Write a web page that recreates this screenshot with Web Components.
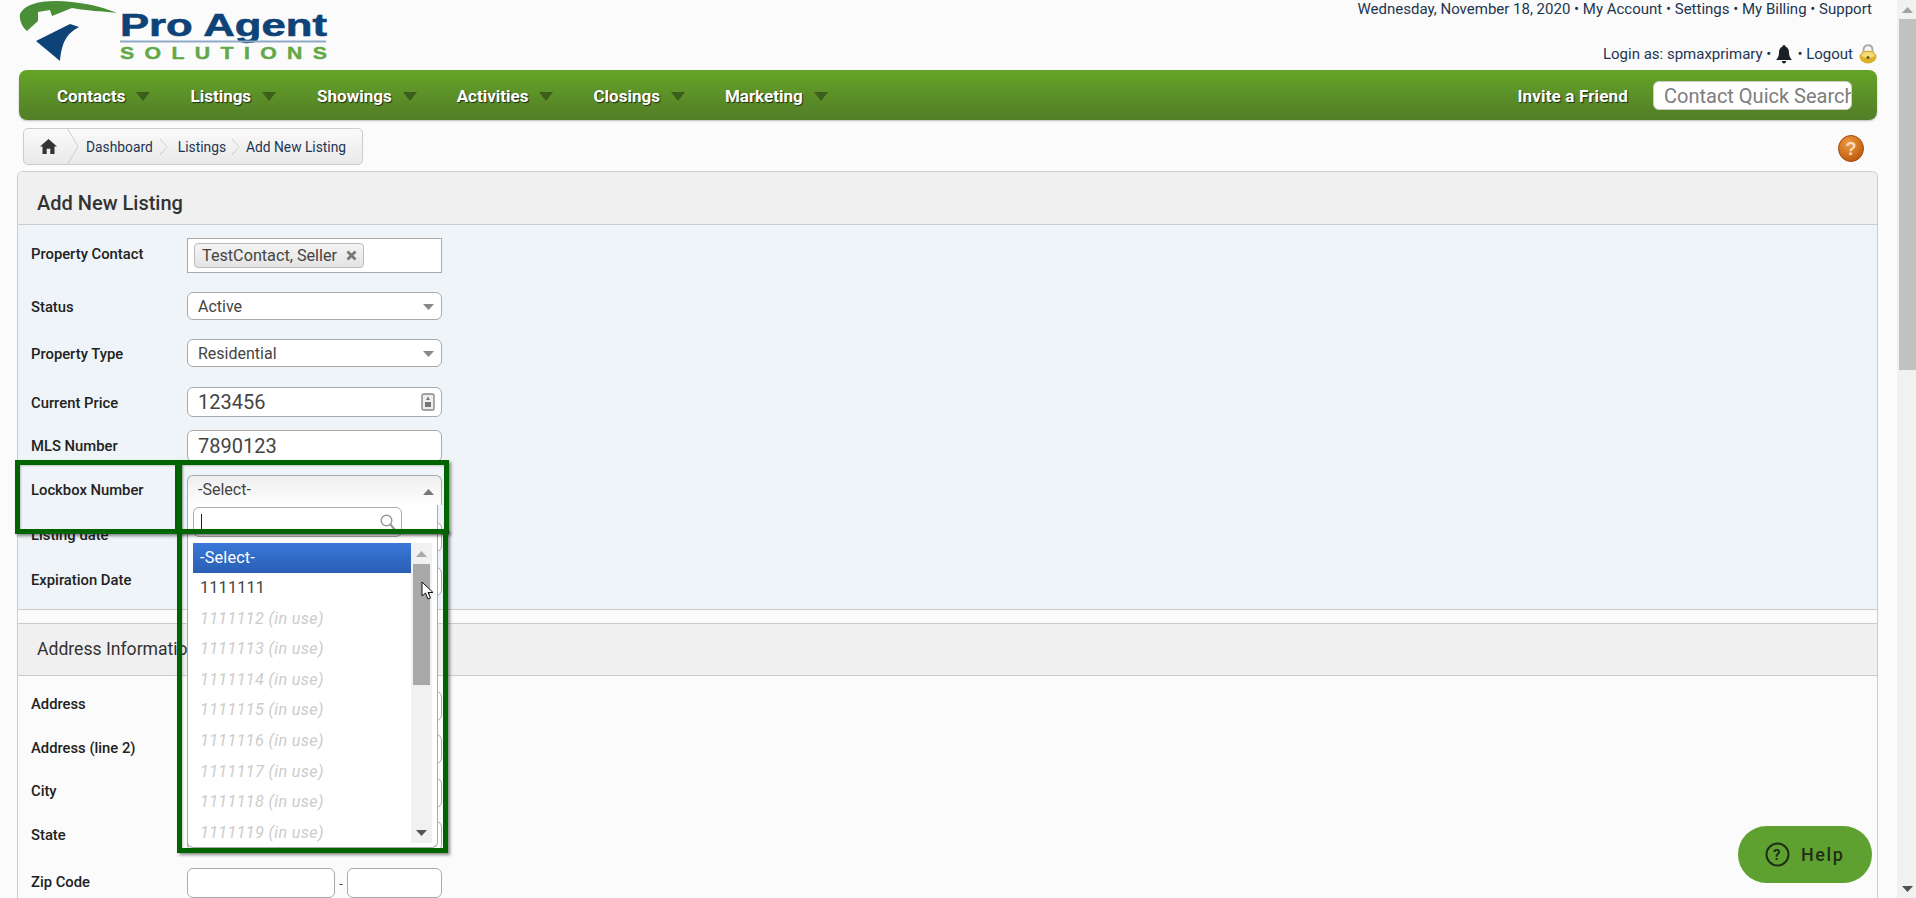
<!DOCTYPE html>
<html lang="en">
<head>
<meta charset="utf-8">
<title>Add New Listing</title>
<style>
  html, body { margin: 0; height: 100%; overflow: hidden; }
  body { background: #fbfbfb; font-family: Roboto, "Liberation Sans", sans-serif; color: #333; }
  #page { display: flex; height: 898px; }
  #main { flex: 1; min-width: 0; position: relative; overflow: hidden; }
</style>
</head>
<body>
<div id="page">
  <div id="main">
    <pa-header></pa-header>
    <pa-nav></pa-nav>
    <pa-breadcrumb></pa-breadcrumb>
    <pa-panel>
      <pa-section title="Add New Listing" tint>
        <pa-row label="Property Contact" gap="13" nudge="-2"><pa-tags>TestContact, Seller</pa-tags></pa-row>
        <pa-row label="Status" gap="19" nudge="1"><pa-select>Active</pa-select></pa-row>
        <pa-row label="Property Type" gap="19" nudge="1"><pa-select>Residential</pa-select></pa-row>
        <pa-row label="Current Price" gap="20" nudge="1"><pa-input value="123456" h="30" icon></pa-input></pa-row>
        <pa-row label="MLS Number" gap="13"><pa-input value="7890123" h="32"></pa-input></pa-row>
        <pa-row label="Lockbox Number" gap="13"><pa-lockbox></pa-lockbox></pa-row>
        <pa-row label="Listing date" gap="17" nudge="-2"><pa-input h="30"></pa-input></pa-row>
        <pa-row label="Expiration Date" gap="15" nudge="-2"><pa-input h="29"></pa-input></pa-row>
      </pa-section>
      <pa-section title="Address Information">
        <pa-row label="Address" gap="15" nudge="-2"><pa-input h="30"></pa-input></pa-row>
        <pa-row label="Address (line 2)" gap="13" nudge="-1"><pa-input h="30"></pa-input></pa-row>
        <pa-row label="City" gap="14" nudge="-2"><pa-input h="30"></pa-input></pa-row>
        <pa-row label="State" gap="13" nudge="-1"><pa-input h="30"></pa-input></pa-row>
        <pa-row label="Zip Code" gap="17" nudge="-1"><pa-zip></pa-zip></pa-row>
      </pa-section>
    </pa-panel>
    <pa-mark x="15" y="460" w="165" h="74"></pa-mark>
    <pa-mark x="177" y="460" w="272" h="74"></pa-mark>
    <pa-mark x="177" y="529" w="271" h="324" open></pa-mark>
    <pa-cursor></pa-cursor>
    <pa-help></pa-help>
  </div>
  <pa-scrollbar></pa-scrollbar>
</div>

<script>
const caret = (dir) => `<svg width="11" height="6" viewBox="0 0 11 6"><path d="${dir === 'up' ? 'M0 6L5.5 0L11 6Z' : 'M0 0L5.5 6L11 0Z'}" fill="#777"/></svg>`;

class PaHeader extends HTMLElement {
  constructor() {
    super();
    this.attachShadow({ mode: 'open' });
    this.shadowRoot.innerHTML = `
      <style>
        :host { display: flex; height: 70px; justify-content: space-between; }
        .logo { display: block; margin: 0; }
        .util { width: 600px; padding-right: 20px; box-sizing: border-box; display: flex; flex-direction: column; align-items: flex-end; font-size: 15px; color: #1d3550; }
        .line1 { height: 18px; line-height: 18px; margin-right: 5px; }
        .line2 { display: flex; align-items: center; gap: 4px; margin-top: 26px; height: 20px; }
        .bell { margin: 0 1px; }
      </style>
      <svg class="logo" width="340" height="70" viewBox="0 0 340 70">
        <path d="M20 14C25 3 45 -1 72 2C92 4 108 9 117 13C100 11 88 11 72 8L52 16L50 10L38 12L38 21L27 31C22 27 19 20 20 14Z" fill="#4a8f38"/>
        <path d="M36 41L70 24L79 27C68 33 62 40 60 61Z" fill="#0e4377"/>
        <text x="120" y="36" font-family="Liberation Sans" font-weight="700" font-size="32" textLength="207" lengthAdjust="spacingAndGlyphs" fill="#0e4377" stroke="#0e4377" stroke-width=".6">Pro Agent</text>
        <rect x="120" y="40.5" width="206" height="2" fill="#8fa9c7"/>
        <text transform="translate(120 59) scale(1.25 1)" font-family="Liberation Sans" font-weight="700" font-size="17" textLength="165.6" lengthAdjust="spacing" fill="#62a844" stroke="#62a844" stroke-width=".4">SOLUTIONS</text>
      </svg>
      <div class="util">
        <div class="line1">Wednesday, November 18, 2020 • My Account • Settings • My Billing • Support</div>
        <div class="line2">
          <span>Login as: spmaxprimary •</span>
          <svg class="bell" width="16" height="19" viewBox="0 0 16 19"><path d="M8 0C9 0 9.6 .8 9.6 1.8C12 2.6 13 4.8 13 7.5C13 11 14 13 16 15H0C2 13 3 11 3 7.5C3 4.8 4 2.6 6.4 1.8C6.4 .8 7 0 8 0ZM5.8 16H10.2C10 17.6 9.2 18.5 8 18.5C6.8 18.5 6 17.6 5.8 16Z" fill="#1a1f26"/></svg>
          <span>• Logout</span>
          <svg width="18" height="20" viewBox="0 0 18 20" style="margin-left:2px"><path d="M4.5 9V6C4.5 3 6.4 1.3 9 1.3C11.6 1.3 13.5 3 13.5 6V9" fill="none" stroke="#aaa" stroke-width="2"/><ellipse cx="9" cy="13" rx="8.5" ry="6.5" fill="#dcb22c"/><ellipse cx="9" cy="11" rx="6.5" ry="3" fill="#f3dc7c"/><circle cx="9" cy="13.5" r="1.5" fill="#6f5610"/></svg>
        </div>
      </div>
    `;
  }
}

class PaNav extends HTMLElement {
  constructor() {
    super();
    this.attachShadow({ mode: 'open' });
    const items = [['Contacts', 40], ['Listings', 41], ['Showings', 40], ['Activities', 40], ['Closings', 40], ['Marketing', 0]];
    const links = items.map(([name, gap]) => `
      <span class="item" style="margin-right:${gap}px">${name}<i></i></span>`).join('');
    this.shadowRoot.innerHTML = `
      <style>
        :host { display: flex; align-items: center; height: 50px; margin: 0 20px 0 19px; padding: 1px 25px 0 38px; box-sizing: border-box; border-radius: 8px; background: linear-gradient(#65a427, #527d28); box-shadow: 0 1px 2px rgba(0,0,0,.25); }
        .item, .invite { color: #fff; font-weight: 700; font-size: 17px; text-shadow: 1px 1px 1px #1f2d0f; }
        .item { display: flex; align-items: center; }
        i { display: block; margin-left: 11px; margin-top: 2px; border-left: 7.5px solid transparent; border-right: 7.5px solid transparent; border-top: 9px solid #3c5e1b; }
        .invite { margin-left: auto; letter-spacing: .16px; }
        input { width: 199px; height: 29px; margin-left: 25px; box-sizing: border-box; border: 1px solid #ccc; border-radius: 6px; padding: 0 0 0 10px; font: 20px Roboto, sans-serif; background: #fff; }
        input::placeholder { color: #7d7d7d; opacity: 1; }
      </style>
      ${links}
      <span class="invite">Invite a Friend</span>
      <input placeholder="Contact Quick Search">
    `;
  }
}

class PaBreadcrumb extends HTMLElement {
  constructor() {
    super();
    this.attachShadow({ mode: 'open' });
    const chev = '<svg width="14" height="37" viewBox="0 0 14 37"><path d="M1 0L12 18.5L1 37" fill="none" stroke="#ccc"/></svg>';
    this.shadowRoot.innerHTML = `
      <style>
        :host { display: flex; height: 38px; margin-top: 8px; }
        .wrap { display: flex; align-items: center; height: 37px; margin-left: 23px; border: 1px solid #ccc; border-radius: 5px; background: linear-gradient(#fafafa, #e9e9e9); box-sizing: border-box; font-size: 13.8px; color: #1d3550; }
        .home { display: flex; width: 42px; justify-content: center; margin-left: 3px; margin-right: -3px; }
        .c { display: flex; height: 35px; overflow: hidden; align-items: center; }
        .c svg { height: 37px; }
        .step { margin: 0 5px; }
        .first { margin-left: 6px; margin-right: 6px; }
        .l2 { margin-left: 9px; margin-right: 5px; }
        .last { margin: 0 16px 0 5px; }
        .sm svg { width: 10px; height: 16px; }
        .help { margin-left: auto; margin-right: 33px; margin-top: 7px; }
      </style>
      <div class="wrap">
        <span class="home"><svg width="17" height="15" viewBox="0 0 17 15"><path d="M8.5 0L17 7.5H14.5V15H10.3V9.8H6.7V15H2.5V7.5H0Z" fill="#333"/></svg></span>
        <span class="c">${chev}</span>
        <span class="step first">Dashboard</span>
        <span class="c sm"><svg viewBox="0 0 10 16"><path d="M1 0L8 8L1 16" fill="none" stroke="#ccc"/></svg></span>
        <span class="step l2">Listings</span>
        <span class="c sm"><svg viewBox="0 0 10 16"><path d="M1 0L8 8L1 16" fill="none" stroke="#ccc"/></svg></span>
        <span class="last">Add New Listing</span>
      </div>
      <svg class="help" width="26" height="27" viewBox="0 0 26 27">
        <defs><radialGradient id="o" cx=".4" cy=".3" r=".8"><stop offset="0" stop-color="#f09a3c"/><stop offset="1" stop-color="#b7530c"/></radialGradient></defs>
        <ellipse cx="13" cy="13.5" rx="12.5" ry="13" fill="url(#o)" stroke="#a44a0c"/>
        <text x="13" y="20" font-family="Liberation Sans" font-weight="700" font-size="18" text-anchor="middle" fill="#f8dcc0">?</text>
      </svg>
    `;
  }
}

class PaPanel extends HTMLElement {
  constructor() {
    super();
    this.attachShadow({ mode: 'open' });
    this.shadowRoot.innerHTML = `
      <style>
        :host { display: block; margin: 5px 19px 0 17px; border: 1px solid #ccc; border-bottom: 0; border-radius: 6px 6px 0 0; overflow: hidden; height: 800px; box-sizing: border-box; }
      </style>
      <slot></slot>
    `;
  }
}

class PaSection extends HTMLElement {
  constructor() {
    super();
    this.attachShadow({ mode: 'open' });
    this.shadowRoot.innerHTML = `
      <style>
        :host { display: block; }
        :host(:not([tint])) { border-top: 1px solid #ccc; }
        h2 { margin: 0; height: 51px; line-height: 51px; padding-left: 19px; font-size: 17.6px; font-weight: 400; color: #333; background: #f0f0f0; border-bottom: 1px solid #ccc; }
        :host([tint]) h2 { height: 53px; box-sizing: border-box; line-height: 62px; font-size: 20px; font-weight: 500; }
        .body { padding-bottom: 13px; }
        :host([tint]) .body { background: #eff4f8; border-bottom: 1px solid #ccc; margin-bottom: 13px; }
      </style>
      <h2>${this.getAttribute('title')}</h2>
      <div class="body"><slot></slot></div>
    `;
  }
}

class PaRow extends HTMLElement {
  constructor() {
    super();
    this.attachShadow({ mode: 'open' });
    const nudge = this.getAttribute('nudge') || 0;
    this.shadowRoot.innerHTML = `
      <style>
        :host { display: flex; align-items: center; padding-left: 13px; padding-top: ${this.getAttribute('gap') || 0}px; }
        label { width: 156px; flex: none; font-size: 14.8px; font-weight: 500; color: #222; position: relative; top: ${nudge}px; }
      </style>
      <label>${this.getAttribute('label')}</label>
      <slot></slot>
    `;
  }
}

class PaTags extends HTMLElement {
  constructor() {
    super();
    this.attachShadow({ mode: 'open' });
    this.shadowRoot.innerHTML = `
      <style>
        :host { display: flex; align-items: center; width: 255px; height: 35px; box-sizing: border-box; border: 1px solid #aaa; background: #fff; padding-left: 6px; }
        .tag { display: flex; align-items: center; height: 25px; box-sizing: border-box; width: 170px; padding-left: 7px; border: 1px solid #bbb; border-radius: 4px; background: linear-gradient(#f4f4f4, #e4e4e4); font-size: 16.2px; color: #444; white-space: nowrap; }
        svg { margin-left: 9px; flex: none; }
      </style>
      <span class="tag"><slot></slot><svg width="11" height="11" viewBox="0 0 11 11"><path d="M1.5 1.5L9.5 9.5M9.5 1.5L1.5 9.5" stroke="#777" stroke-width="2.8"/></svg></span>
    `;
  }
}

class PaSelect extends HTMLElement {
  constructor() {
    super();
    this.attachShadow({ mode: 'open' });
    this.shadowRoot.innerHTML = `
      <style>
        :host { display: flex; align-items: center; justify-content: space-between; width: 255px; height: 28px; box-sizing: border-box; border: 1px solid #aaa; border-radius: 6px; background: #fff; padding: 0 7px 0 10px; font-size: 16px; color: #444; }
        svg { margin-top: 2px; }
        svg path { fill: #888; }
      </style>
      <slot></slot>${caret('down')}
    `;
  }
}

class PaInput extends HTMLElement {
  constructor() {
    super();
    this.attachShadow({ mode: 'open' });
    const icon = this.hasAttribute('icon') ? `<svg width="14" height="18" viewBox="0 0 14 18"><rect x="1" y="1" width="12" height="16" rx="1.5" fill="#eee" stroke="#888" stroke-width="1.4"/><path d="M7 3.5L9 7H5ZM4 9H10V14H4Z" fill="#777"/></svg>` : '';
    this.shadowRoot.innerHTML = `
      <style>
        :host { display: flex; align-items: center; justify-content: space-between; width: 255px; height: ${this.getAttribute('h') || 30}px; box-sizing: border-box; border: 1px solid #aaa; border-radius: 6px; background: #fff; padding: 0 6px 0 10px; font-size: 20px; color: #444; }
      </style>
      <span>${this.getAttribute('value') || ''}</span>${icon}
    `;
  }
}

class PaZip extends HTMLElement {
  constructor() {
    super();
    this.attachShadow({ mode: 'open' });
    this.shadowRoot.innerHTML = `
      <style>
        :host { display: flex; align-items: center; width: 255px; font-size: 13px; color: #444; }
        div { height: 30px; box-sizing: border-box; border: 1px solid #aaa; border-radius: 6px; background: #fff; }
        .a { width: 148px; }
        .b { width: 95px; }
        span { width: 12px; text-align: center; }
      </style>
      <div class="a"></div><span>-</span><div class="b"></div>
    `;
  }
}

class PaLockbox extends HTMLElement {
  constructor() {
    super();
    this.attachShadow({ mode: 'open' });
    const options = ['1111112', '1111113', '1111114', '1111115', '1111116', '1111117', '1111118', '1111119'];
    this.shadowRoot.innerHTML = `
      <style>
        :host { display: block; position: relative; width: 255px; height: 30px; z-index: 2; }
        .head { display: flex; align-items: center; justify-content: space-between; height: 30px; box-sizing: border-box; border: 1px solid #aaa; border-bottom: 0; border-radius: 6px 6px 0 0; background: linear-gradient(#eee, #fff); padding: 0 7px 3px 10px; font-size: 16px; color: #444; }
        .head svg { margin-top: 5px; }
        .drop { position: absolute; left: 0; top: 30px; width: 251px; height: 343px; box-sizing: border-box; border: 1px solid #aaa; border-top: 0; border-radius: 0 0 6px 6px; background: #fff; padding: 2px 5px 0; overflow: hidden; }
        .search { display: flex; align-items: center; justify-content: space-between; width: 209px; height: 30px; box-sizing: border-box; border: 1px solid #aaa; border-radius: 6px; padding: 0 5px 0 7px; }
        .cursor { width: 1px; height: 17px; background: #222; }
        .list { display: flex; margin-top: 6px; height: 300px; overflow: hidden; }
        .opts { width: 219px; font-size: 16.2px; color: #444; }
        .opt { height: 30.6px; line-height: 30.6px; padding-left: 7px; letter-spacing: .2px; }
        .opt.sel { height: 30px; line-height: 30px; color: #fff; background: linear-gradient(#3a78d8, #2a5fb4); }
        .opt.off { color: #ccc; font-style: italic; letter-spacing: .35px; }
        .bar { width: 21px; background: #f1f1f1; display: flex; flex-direction: column; align-items: center; }
        .arrow { height: 21px; display: flex; align-items: center; justify-content: center; }
        .thumb { width: 17px; height: 121px; background: #a8a8a8; }
        .fill { flex: 1; }
      </style>
      <div class="head"><span>-Select-</span>${caret('up')}</div>
      <div class="drop">
        <div class="search">
          <span class="cursor"></span>
          <svg width="16" height="17" viewBox="0 0 16 17"><circle cx="6.5" cy="6.5" r="5.3" fill="none" stroke="#999" stroke-width="1.4"/><path d="M10.5 10.5L15 16" stroke="#999" stroke-width="2"/></svg>
        </div>
        <div class="list">
          <div class="opts">
            <div class="opt sel">-Select-</div>
            <div class="opt">1111111</div>
            ${options.map((o) => `<div class="opt off">${o} (in use)</div>`).join('')}
          </div>
          <div class="bar">
            <div class="arrow">${caret('up').replace('#777', '#aaa')}</div>
            <div class="thumb"></div>
            <div class="fill"></div>
            <div class="arrow">${caret('down').replace('#777', '#555')}</div>
          </div>
        </div>
      </div>
    `;
  }
}

// annotation boxes drawn over the screenshot
class PaMark extends HTMLElement {
  constructor() {
    super();
    this.attachShadow({ mode: 'open' });
    const a = (n) => this.getAttribute(n);
    this.shadowRoot.innerHTML = `
      <style>
        :host { display: block; position: absolute; z-index: 5; left: ${a('x')}px; top: ${a('y')}px; width: ${a('w')}px; height: ${a('h')}px; box-sizing: border-box; border: 5px solid #006400; box-shadow: 2px 2px 3px rgba(0,0,0,.45), inset 1px 1px 2px rgba(0,0,0,.2); }
      </style>
    `;
  }
}

class PaCursor extends HTMLElement {
  constructor() {
    super();
    this.attachShadow({ mode: 'open' });
    this.shadowRoot.innerHTML = `
      <style>:host { position: absolute; z-index: 6; left: 421px; top: 581px; display: block; width: 13px; height: 20px; }</style>
      <svg width="13" height="20" viewBox="0 0 13 20"><path d="M1 1V15L4.5 12L7 18L9.5 17L7 11.5H12Z" fill="#fff" stroke="#111"/></svg>
    `;
  }
}

class PaHelp extends HTMLElement {
  constructor() {
    super();
    this.attachShadow({ mode: 'open' });
    this.shadowRoot.innerHTML = `
      <style>
        :host { position: absolute; z-index: 6; left: 1738px; top: 826px; display: flex; align-items: center; gap: 11px; width: 134px; height: 57px; box-sizing: border-box; padding-left: 27px; border-radius: 29px; background: #5fa130; color: #1f2f15; font: 500 18px Roboto, sans-serif; letter-spacing: 1.6px; }
      </style>
      <svg width="25" height="25" viewBox="0 0 25 25"><circle cx="12.5" cy="12.5" r="11" fill="none" stroke="#1f2f15" stroke-width="2"/><text x="12.5" y="18" text-anchor="middle" font-family="Roboto" font-weight="700" font-size="15" fill="#1f2f15">?</text></svg>
      <span>Help</span>
    `;
  }
}

class PaScrollbar extends HTMLElement {
  constructor() {
    super();
    this.attachShadow({ mode: 'open' });
    this.shadowRoot.innerHTML = `
      <style>
        :host { display: flex; flex-direction: column; align-items: flex-end; width: 19px; height: 898px; background: #f1f1f1; }
        .arrow { width: 17px; height: 19px; display: flex; align-items: center; justify-content: center; flex: none; }
        .thumb { width: 17px; height: 351px; background: #c1c1c1; flex: none; }
        .fill { flex: 1; }
      </style>
      <div class="arrow">${caret('up').replace('#777', '#a0a0a0')}</div>
      <div class="thumb"></div>
      <div class="fill"></div>
      <div class="arrow">${caret('down').replace('#777', '#505050')}</div>
    `;
  }
}

customElements.define('pa-header', PaHeader);
customElements.define('pa-nav', PaNav);
customElements.define('pa-breadcrumb', PaBreadcrumb);
customElements.define('pa-panel', PaPanel);
customElements.define('pa-section', PaSection);
customElements.define('pa-row', PaRow);
customElements.define('pa-tags', PaTags);
customElements.define('pa-select', PaSelect);
customElements.define('pa-input', PaInput);
customElements.define('pa-zip', PaZip);
customElements.define('pa-lockbox', PaLockbox);
customElements.define('pa-mark', PaMark);
customElements.define('pa-cursor', PaCursor);
customElements.define('pa-help', PaHelp);
customElements.define('pa-scrollbar', PaScrollbar);
</script>
</body>
</html>
